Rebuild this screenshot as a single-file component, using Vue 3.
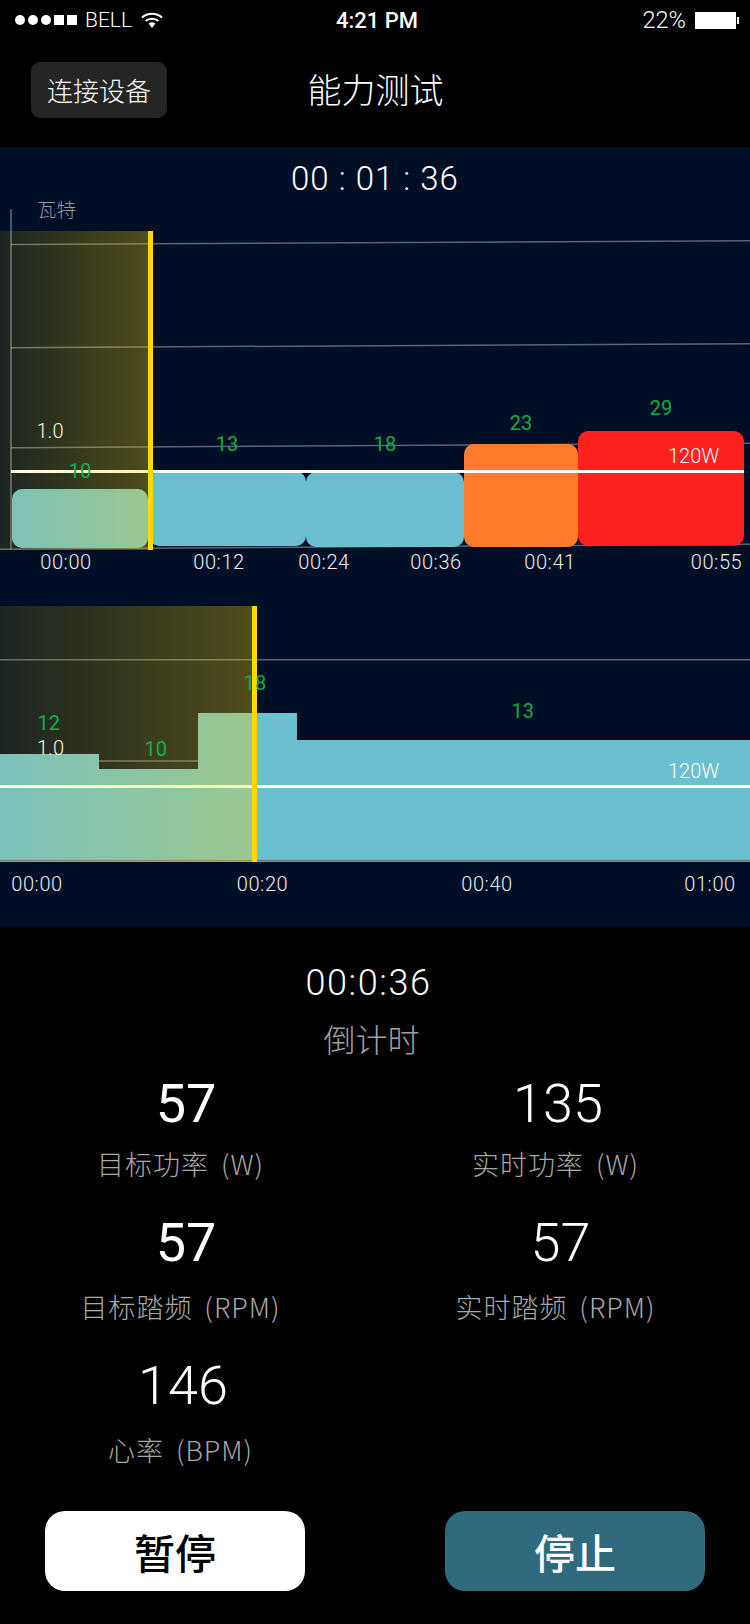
<script setup>
const gridTop = [
  [11, 244.5, 750, 240.7],
  [11, 347.7, 750, 343.7],
  [11, 447.7, 750, 443.3],
  [0, 549.2, 750, 544.3],
]
const barsTop = [
  { x: 12, y: 489, w: 136, h: 59, c: '#6bbfd1' },
  { x: 149, y: 471.5, w: 157, h: 74.5, c: '#6bbfd1' },
  { x: 306, y: 472, w: 158, h: 75, c: '#6bbfd1' },
  { x: 464, y: 444, w: 114, h: 103, c: '#ff7a2c' },
  { x: 578, y: 431, w: 166, h: 114.7, c: '#ff2020' },
]
const greenTop = [
  { x: 80, y: 478, t: '10' },
  { x: 227, y: 451, t: '13' },
  { x: 385, y: 451, t: '18' },
  { x: 521, y: 430, t: '23' },
  { x: 661, y: 415, t: '29' },
]
const timesTop = [
  { x: 66, t: '00:00' },
  { x: 219, t: '00:12' },
  { x: 324, t: '00:24' },
  { x: 436, t: '00:36' },
  { x: 550, t: '00:41' },
  { x: 716.5, t: '00:55' },
]
const barsLow = [
  { x: 0, y: 754, w: 99 },
  { x: 99, y: 769, w: 99 },
  { x: 198, y: 713, w: 99 },
  { x: 297, y: 740, w: 453 },
]
const greenLow = [
  { x: 48.7, y: 730, t: '12' },
  { x: 155.7, y: 756, t: '10' },
  { x: 255, y: 690, t: '18' },
  { x: 522.7, y: 718, t: '13' },
]
const timesLow = [
  { x: 37, t: '00:00' },
  { x: 262.5, t: '00:20' },
  { x: 487, t: '00:40' },
  { x: 710, t: '01:00' },
]
const stats = [
  { v: '57', l: '目标功率 (W)', kind: 'strong' },
  { v: '135', l: '实时功率 (W)', kind: '' },
  { v: '57', l: '目标踏频 (RPM)', kind: 'strong' },
  { v: '57', l: '实时踏频 (RPM)', kind: 'nudge' },
  { v: '146', l: '心率 (BPM)', kind: '' },
]
</script>

<template>
  <div class="page">
    <header class="status">
      <div class="status-left">
        <div class="signal">
          <i class="dot"></i><i class="dot"></i><i class="dot"></i><i class="sq"></i><i class="sq"></i>
        </div>
        <span class="carrier">BELL</span>
        <svg class="wifi" width="22" height="16" viewBox="0 0 22 16">
          <path d="M1 5.6C6.6 .4 15.4 .4 21 5.6" fill="none" stroke="#fff" stroke-width="2" />
          <path d="M4.6 9.1C8.2 5.9 13.8 5.9 17.4 9.1" fill="none" stroke="#fff" stroke-width="2" />
          <path d="M7.6 11.6C9.6 9.9 12.4 9.9 14.4 11.6L11 16Z" fill="#fff" />
        </svg>
      </div>
      <div class="clock">4:21 PM</div>
      <div class="status-right">
        <span>22%</span>
        <div class="battery"></div>
      </div>
    </header>

    <nav class="nav">
      <button class="connect">连接设备</button>
      <h1 class="title">能力测试</h1>
    </nav>

    <section class="panel">
      <div class="elapsed">00 : 01 : 36</div>
      <svg class="chart" width="750" height="390" viewBox="0 190 750 390">
        <defs>
          <linearGradient id="glow" x1="0" x2="1" y1="0" y2="0">
            <stop offset="0" stop-color="#ffd900" stop-opacity="0.11" />
            <stop offset="1" stop-color="#ffd900" stop-opacity="0.31" />
          </linearGradient>
        </defs>
        <text x="37" y="217" class="unit">瓦特</text>
        <line x1="11" x2="11" y1="209" y2="549" class="axis" />
        <line v-for="(g, i) in gridTop" :key="i" :x1="g[0]" :y1="g[1]" :x2="g[2]" :y2="g[3]" class="grid" />
        <rect v-for="(b, i) in barsTop" :key="i" :x="b.x" :y="b.y" :width="b.w" :height="b.h" rx="10" :fill="b.c" />
        <rect x="11" y="470" width="733" height="3" fill="#fff" />
        <text x="36.5" y="438" class="tick white">1.0</text>
        <text x="668" y="463" class="tick white">120W</text>
        <rect x="0" y="231" width="148" height="319" fill="url(#glow)" />
        <rect x="148" y="231" width="5" height="319" fill="#ffd900" />
        <text v-for="g in greenTop" :key="g.t" :x="g.x" :y="g.y" class="tick green mid">{{ g.t }}</text>
        <text v-for="t in timesTop" :key="t.t" :x="t.x" y="569" class="tick time mid">{{ t.t }}</text>
      </svg>
      <svg class="chart" width="750" height="347" viewBox="0 580 750 347">
        <line x1="0" x2="750" y1="659.7" y2="659.7" class="grid" />
        <line x1="0" x2="750" y1="761" y2="761" class="grid" />
        <rect v-for="(b, i) in barsLow" :key="i" :x="b.x" :y="b.y" :width="b.w" :height="862 - b.y" fill="#6bbfd1" />
        <rect x="0" y="785" width="750" height="3" fill="#fff" />
        <line x1="0" x2="750" y1="860.7" y2="860.7" class="grid base" />
        <text x="37" y="755" class="tick white">1.0</text>
        <text x="668" y="778" class="tick white">120W</text>
        <rect x="0" y="606" width="252" height="256" fill="url(#glow)" />
        <rect x="252" y="606" width="5" height="256" fill="#ffd900" />
        <text v-for="g in greenLow" :key="g.t" :x="g.x" :y="g.y" class="tick green mid">{{ g.t }}</text>
        <text v-for="t in timesLow" :key="t.t" :x="t.x" y="891" class="tick time mid">{{ t.t }}</text>
      </svg>
    </section>

    <section class="summary">
      <div class="countdown">00:0:36</div>
      <div class="countdown-label">倒计时</div>
      <div class="stats">
        <div v-for="(s, i) in stats" :key="i" class="stat">
          <div class="value" :class="s.kind">{{ s.v }}</div>
          <div class="label">{{ s.l }}</div>
        </div>
      </div>
    </section>

    <footer class="actions">
      <button class="action pause">暂停</button>
      <button class="action stop">停止</button>
    </footer>
  </div>
</template>

<style>
html, body { margin: 0; background: #000; }
</style>

<style scoped>
.page {
  width: 750px;
  height: 1624px;
  background: #000;
  color: #fff;
  overflow: hidden;
  display: flex;
  flex-direction: column;
  font-family: Roboto, "Noto Sans CJK SC", sans-serif;
  font-weight: 300;
}
.status {
  height: 40px;
  display: grid;
  grid-template-columns: 1fr auto 1fr;
  align-items: center;
  padding: 0 11px 0 15px;
  font-size: 20px;
}
.status-left { display: flex; align-items: center; }
.signal { display: flex; gap: 3px; align-items: center; margin-right: 8px; }
.dot { width: 10px; height: 10px; border-radius: 50%; background: #fff; }
.sq { width: 10px; height: 10px; background: #fff; }
.carrier { font-size: 21px; }
.wifi { margin-left: 9px; }
.clock { font-weight: 500; font-size: 22px; }
.status-right { display: flex; justify-content: flex-end; align-items: center; gap: 9px; font-size: 23.5px; }
.battery {
  position: relative;
  width: 41px;
  height: 17px;
  background: #fff;
  margin-right: 3px;
}
.battery::after {
  content: "";
  position: absolute;
  right: -3px;
  top: 5px;
  width: 2px;
  height: 7px;
  background: #fff;
}
.nav {
  height: 107px;
  display: flex;
  align-items: center;
  padding: 8px 0 16px 31px;
  box-sizing: border-box;
}
.connect {
  width: 136px;
  height: 56px;
  border: 0;
  border-radius: 9px;
  background: #252525;
  color: #fff;
  font: 300 26px "Noto Sans CJK SC", sans-serif;
  padding: 0;
}
.title {
  margin: 0 0 2px 140.5px;
  font: 300 34px "Noto Sans CJK SC", sans-serif;
}
.panel {
  height: 780px;
  background: #000e26;
  display: flex;
  flex-direction: column;
}
.elapsed {
  height: 43px;
  box-sizing: border-box;
  padding-top: 14px;
  line-height: 35px;
  text-align: center;
  font-size: 33px;
  letter-spacing: 1px;
}
.chart { display: block; flex: none; }
.grid { stroke: rgba(255, 255, 255, 0.36); stroke-width: 1.5; }
.grid.base { stroke: rgba(110, 110, 110, 0.95); }
.axis { stroke: rgba(255, 255, 255, 0.3); stroke-width: 2; }
.unit { font: 300 19.5px "Noto Sans CJK SC", sans-serif; fill: #999; }
.tick { font-size: 20px; font-family: Roboto, sans-serif; font-weight: 300; }
.white { fill: #fff; }
.green { fill: #12ad47; font-weight: 400; }
.time { fill: #eee; letter-spacing: 0.6px; }
.mid { text-anchor: middle; }
.summary {
  display: flex;
  flex-direction: column;
  align-items: center;
  padding-top: 35px;
}
.countdown { font-size: 36px; line-height: 42px; margin-right: 13px; letter-spacing: 1.6px; }
.countdown-label {
  font: 300 32px/42px "Noto Sans CJK SC", sans-serif;
  color: #a0a0a0;
  margin-top: 13px;
  margin-right: 7px;
}
.stats {
  align-self: stretch;
  display: grid;
  grid-template-columns: 366px 384px;
  grid-auto-rows: 143px;
  margin-top: 9.5px;
}
.stat { display: flex; flex-direction: column; align-items: center; }
.value { font-size: 54px; line-height: 62px; }
.value.strong { font-weight: 400; padding-left: 6px; }
.value.nudge { padding-left: 5px; }
.stat:nth-child(-n+2) .value { margin-top: 4px; }
.stat:nth-child(-n+2) .label { margin-top: 11.5px; }
.label {
  font: 300 27px/36px "Noto Sans CJK SC", Roboto, sans-serif;
  color: #a8a8a8;
  margin-top: 15.5px;
  margin-right: 5px;
  letter-spacing: 1px;
  word-spacing: 5px;
}
.actions {
  display: flex;
  justify-content: space-between;
  padding: 0 45px;
  margin-top: auto;
  margin-bottom: 33px;
}
.action {
  width: 260px;
  height: 80px;
  border: 0;
  border-radius: 20px;
  padding: 0;
  font: 500 41px "Noto Sans CJK SC", sans-serif;
}
.pause { background: #fff; color: #000; }
.stop { background: #2f6a7e; color: #fff; }
</style>
